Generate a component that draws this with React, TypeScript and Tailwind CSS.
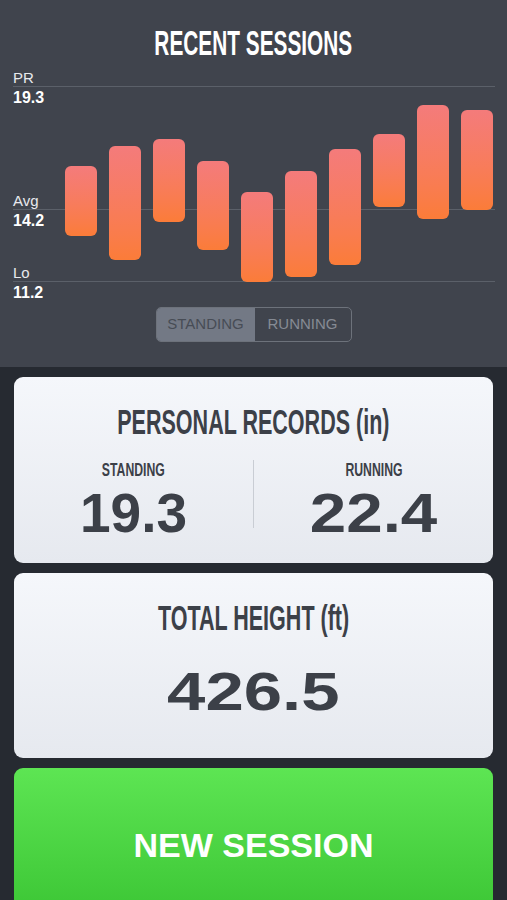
const bars = [
  { top: 100, bottom: 170 },
  { top: 80, bottom: 194 },
  { top: 73, bottom: 156 },
  { top: 95, bottom: 184 },
  { top: 126, bottom: 216 },
  { top: 105, bottom: 211 },
  { top: 83, bottom: 199 },
  { top: 68, bottom: 141 },
  { top: 39, bottom: 153 },
  { top: 44, bottom: 144 },
];

const guides = [
  { name: "PR", value: "19.3", line: 20, label: 4 },
  { name: "Avg", value: "14.2", line: 143, label: 127 },
  { name: "Lo", value: "11.2", line: 215, label: 199 },
];

const font = { fontFamily: '"Liberation Sans", Arial, sans-serif' };

const Condensed = ({ children, scale = "scale-x-[0.6]" }: { children: string; scale?: string }) => (
  <span className={`inline-block whitespace-nowrap ${scale}`}>{children}</span>
);

const RecentSessions = () => (
  <div className="h-[367px] bg-[#40444d] pt-[25px]">
    <h1 className="text-center text-[35px] leading-none font-bold text-white">
      <span className="inline-block whitespace-nowrap scale-x-[0.595]">RECENT SESSIONS</span>
    </h1>
    <div className="relative mt-[6px] h-[236px]">
      {guides.map((g) => (
        <div key={g.name}>
          <div
            className="absolute left-[13px] right-[12px] h-px bg-[#5b6069]"
            style={{ top: g.line }}
          />
          <div className="absolute left-[13px] text-[#e8eaee]" style={{ top: g.label }}>
            <div className="text-[15px] leading-[15px]">{g.name}</div>
            <div className="mt-[5px] text-[16px] leading-[16px] font-bold text-white">
              {g.value}
            </div>
          </div>
        </div>
      ))}
      {bars.map((b, i) => (
        <div
          key={i}
          className="absolute w-[32px] rounded-[6px] bg-gradient-to-b from-[#f47b7b] to-[#fb7c38]"
          style={{ left: 65 + i * 44, top: b.top, height: b.bottom - b.top }}
        />
      ))}
    </div>
    <div className="mt-[5px] flex justify-center">
      <div className="flex h-[35px] w-[196px] overflow-hidden rounded-[5px] border border-[#6d727b] text-[15px]">
        <div className="flex w-[98px] items-center justify-center bg-[#737985] text-[#474c55]">
          STANDING
        </div>
        <div className="flex flex-1 items-center justify-center text-[#868b94]">RUNNING</div>
      </div>
    </div>
  </div>
);

const Card = ({ children, className = "" }: { children: React.ReactNode; className?: string }) => (
  <div
    className={`rounded-[9px] bg-gradient-to-b from-[#f5f7fb] to-[#e6e9ef] text-[#3c4048] ${className}`}
  >
    {children}
  </div>
);

const Stat = ({ label, value, scale }: { label: string; value: string; scale: string }) => (
  <div className="flex flex-col items-center">
    <div className="text-[18px] leading-[20px] font-bold">
      <Condensed scale="scale-x-[0.68]">{label}</Condensed>
    </div>
    <div className="mt-[2px] text-[55px] leading-[62px] font-bold">
      <span className={`inline-block whitespace-nowrap ${scale}`}>{value}</span>
    </div>
  </div>
);

export default function App() {
  return (
    <div className="h-[900px] w-full overflow-hidden bg-[#262a31]" style={font}>
      <RecentSessions />
      <div className="flex flex-col gap-[10px] px-[14px] pt-[10px]">
        <Card className="h-[186px] pt-[27px]">
          <div className="text-center text-[35px] leading-none font-bold">
            <Condensed scale="scale-x-[0.615]">PERSONAL RECORDS (in)</Condensed>
          </div>
          <div className="mt-[21px] grid grid-cols-[1fr_1px_1fr] items-start">
            <Stat label="STANDING" value="19.3" scale="scale-x-100" />
            <div className="h-[68px] bg-[#c9cdd4]" />
            <Stat label="RUNNING" value="22.4" scale="scale-x-[1.19]" />
          </div>
        </Card>
        <Card className="h-[185px] pt-[27px]">
          <div className="text-center text-[35px] leading-none font-bold">
            <Condensed scale="scale-x-[0.615]">TOTAL HEIGHT (ft)</Condensed>
          </div>
          <div className="mt-[30px] text-center text-[53px] leading-none font-bold">
            <span className="inline-block whitespace-nowrap scale-x-[1.3]">426.5</span>
          </div>
        </Card>
        <button className="h-[180px] rounded-[9px] bg-gradient-to-b from-[#5de553] to-[#33bf2d] pb-[90px] pt-[60px] text-[34px] leading-none font-bold text-white">
          NEW SESSION
        </button>
      </div>
    </div>
  );
}
